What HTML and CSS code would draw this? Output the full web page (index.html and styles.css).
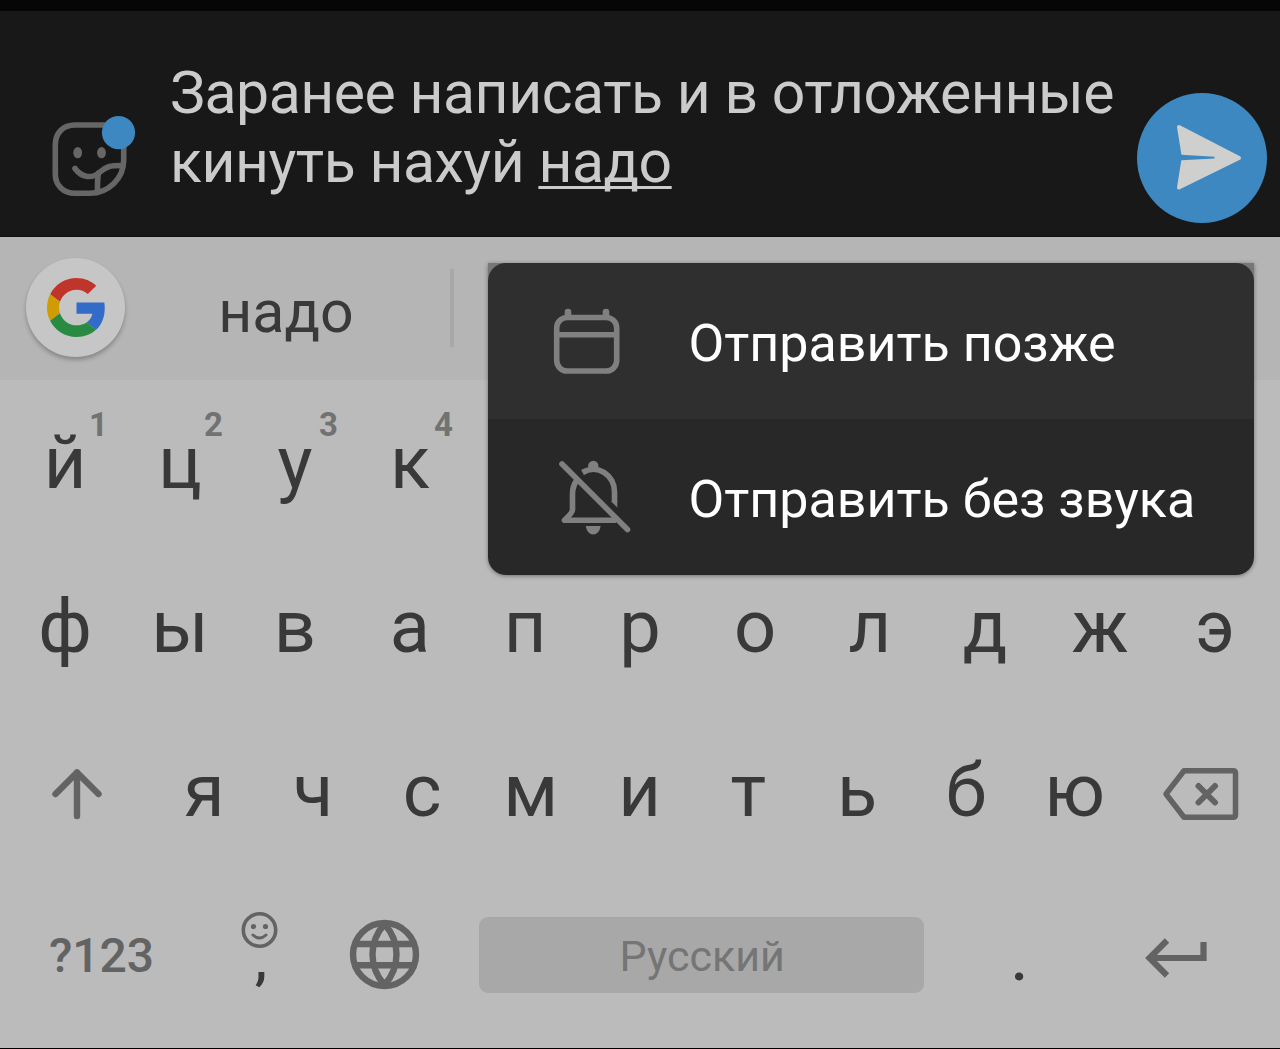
FILE: index.html
```
<!DOCTYPE html>
<html lang="ru">
<head>
  <meta charset="UTF-8">
  <meta name="viewport" content="width=device-width, initial-scale=1.0">
  <title>Сообщение</title>
  <link rel="stylesheet" href="styles.css">
</head>
<body>

<main class="screen">
  <section class="composer">
    <svg class="sticker" viewBox="0 0 96 96">
      <g fill="none" stroke="#666" stroke-width="5.6" stroke-linecap="round">
        <path d="M78.7 30V43C78.7 62 63 76.3 45 76.3H30C18 76.3 10.3 68 10.3 57V28C10.3 16 18 8 30 8H60"/>
        <path d="M30 51.5C37 61 47 62 55 55C61 49.5 65 48.5 77 48.5"/>
        <path d="M53.5 56C52.3 61 52.5 67 52.5 74"/>
      </g>
      <ellipse cx="32.7" cy="35.7" rx="4.4" ry="5.6" fill="#666"/>
      <ellipse cx="56.5" cy="35.7" rx="4.4" ry="5.6" fill="#666"/>
      <circle cx="73.5" cy="15.6" r="16.6" fill="#3d88c0"/>
    </svg>
    <p class="message">Заранее написать и в отложенные<br>кинуть нахуй <u>надо</u></p>
    <div class="send">
      <svg viewBox="0 0 130 130">
        <path d="M42 34L102 65L42 94.5L46.5 66L76 64.5L46.5 62Z" fill="#cfcfcd" stroke="#cfcfcd" stroke-width="4" stroke-linejoin="round"/>
        <path d="M40 61.5L77.5 63.8V65.6L40 67.5Z" fill="#3d88c0"/>
      </svg>
    </div>
  </section>

  <section class="suggestions">
    <div class="google">
      <svg viewBox="0 0 48 48">
        <path fill="#c0352a" d="M24 9.5c3.54 0 6.71 1.22 9.21 3.6l6.85-6.85C35.9 2.38 30.47 0 24 0 14.62 0 6.51 5.38 2.56 13.22l7.98 6.19C12.43 13.72 17.74 9.5 24 9.5z"/>
        <path fill="#326bc8" d="M46.98 24.55c0-1.57-.15-3.09-.38-4.55H24v9.02h12.94c-.58 2.96-2.26 5.48-4.78 7.18l7.73 6c4.51-4.18 7.09-10.36 7.09-17.65z"/>
        <path fill="#cf9c04" d="M10.53 28.59c-.48-1.45-.76-2.99-.76-4.59s.27-3.14.76-4.59l-7.98-6.19C.92 16.46 0 20.12 0 24c0 3.88.92 7.54 2.56 10.78l7.97-6.19z"/>
        <path fill="#298b41" d="M24 48c6.48 0 11.93-2.13 15.89-5.81l-7.73-6c-2.15 1.45-4.92 2.3-8.16 2.3-6.26 0-11.57-4.22-13.47-9.91l-7.98 6.19C6.51 42.62 14.62 48 24 48z"/>
      </svg>
    </div>
    <span class="suggestion">надо</span>
    <span class="divider"></span>
  </section>

  <section class="keyboard">
    <div class="row">
      <span class="key">й<sup>1</sup></span>
      <span class="key">ц<sup>2</sup></span>
      <span class="key">у<sup>3</sup></span>
      <span class="key">к<sup>4</sup></span>
    </div>
    <div class="row">
      <span class="key">ф</span>
      <span class="key">ы</span>
      <span class="key">в</span>
      <span class="key">а</span>
      <span class="key">п</span>
      <span class="key">р</span>
      <span class="key">о</span>
      <span class="key">л</span>
      <span class="key">д</span>
      <span class="key">ж</span>
      <span class="key">э</span>
    </div>
    <div class="row row-third">
      <span class="key">
        <svg width="60" height="60" viewBox="0 0 60 60" class="stroke">
          <path d="M28 55V11.5M6.500 33L28 11.500L49.500 33" stroke-width="6.400" stroke-linecap="round" stroke-linejoin="round"/>
        </svg>
      </span>
      <span class="key">я</span>
      <span class="key">ч</span>
      <span class="key">с</span>
      <span class="key">м</span>
      <span class="key">и</span>
      <span class="key">т</span>
      <span class="key">ь</span>
      <span class="key">б</span>
      <span class="key">ю</span>
      <span class="key">
        <svg width="80" height="60" viewBox="0 0 80 60" class="stroke">
          <path d="M6 33L24 9.700H73Q75.500 9.700 75.500 12.200V53.800Q75.500 56.300 73 56.300H24Z" stroke-width="5.500" stroke-linejoin="round"/>
          <path d="M38.500 25L55 41.500M55 25L38.500 41.500" stroke-width="6" stroke-linecap="round"/>
        </svg>
      </span>
    </div>
    <div class="row row-bottom">
      <span class="key symbols">?123</span>
      <span class="key comma">
        <svg width="40" height="40" viewBox="0 0 40 40" class="stroke">
          <circle cx="19.500" cy="20" r="16.200" stroke-width="3.600"/>
          <path d="M13 25Q19.500 31 26 25" stroke-width="3" stroke-linecap="round"/>
          <circle cx="13.500" cy="16.500" r="2.600" fill="#636363" stroke="none"/>
          <circle cx="25.500" cy="16.500" r="2.600" fill="#636363" stroke="none"/>
        </svg>
        <span>,</span>
      </span>
      <span class="key">
        <svg width="70" height="70" viewBox="0 0 70 70" class="stroke" stroke-width="6.400" stroke-linejoin="bevel">
          <circle cx="34.500" cy="34.500" r="31.500"/>
          <path d="M7 24H62M7 45.200H62"/>
          <path d="M34.500 4C18.500 22 18.500 47 34.500 65C50.500 47 50.500 22 34.500 4Z"/>
        </svg>
      </span>
      <span class="key space">Русский</span>
      <span class="key period">.</span>
      <span class="key">
        <svg width="70" height="50" viewBox="0 0 70 50" class="stroke" stroke-width="6.200">
          <path d="M27 10.500L9.500 28L27 45.500M9.500 28H63.500V12"/>
        </svg>
      </span>
    </div>
  </section>

  <div class="menu">
    <div class="menu-item active">
      <svg viewBox="0 0 96 96">
        <g fill="none" stroke="#808080" stroke-width="5.600">
          <rect x="17.700" y="24.500" width="60" height="53.500" rx="10.500"/>
          <path d="M18 41.700H77"/>
          <path d="M29 23V19M67 23V19" stroke-width="6.600" stroke-linecap="round"/>
        </g>
      </svg>
      <span>Отправить позже</span>
    </div>
    <div class="menu-item">
      <svg viewBox="0 0 96 96">
        <g fill="none" stroke="#808080" stroke-width="5.600" stroke-linejoin="round">
          <path d="M23 15L88.500 80.500" stroke-linecap="round"/>
          <path d="M38 31Q33.500 37 33.500 45V61Q33.500 63.500 25.500 71.300H77"/>
          <path d="M43.500 23.500C59 14.500 75.500 26.500 75.500 43V53"/>
        </g>
        <path d="M72.700 52H78.300V58.500L72.700 53Z" fill="#808080"/>
        <circle cx="54.300" cy="17" r="5.200" fill="#808080"/>
        <path d="M46.700 77H61.700Q60 85.500 54.200 85.500T46.700 77Z" fill="#808080"/>
      </svg>
      <span>Отправить без звука</span>
    </div>
  </div>
</main>

</body>
</html>
```
FILE: styles.css
```
* { box-sizing: border-box; }
body {
  margin: 0;
  font-family: Roboto, sans-serif;
  background-color: #000;
}
svg { display: block; overflow: visible; }
.screen {
  position: relative;
  width: 1280px;
  height: 1049px;
  border-top: 11px solid #060606;
  border-bottom: 1px solid #000;
  overflow: hidden;
}

/* message input */
.composer {
  display: flex;
  height: 226px;
  background-color: #181818;
  border-bottom: 1px solid #101010;
}
.sticker {
  width: 96px;
  height: 96px;
  margin: 106px 29px 0 45px;
}
.message {
  width: 967px;
  margin: 47px 0 0;
  color: #cbcbcb;
  font-size: 58.9px;
  letter-spacing: -0.45px;
  line-height: 69px;
  white-space: nowrap;
}
.message u {
  text-decoration-thickness: 3px;
  text-underline-offset: 4px;
  text-decoration-skip-ink: none;
}
.send {
  width: 130px;
  height: 130px;
  margin-top: 82px;
  border-radius: 50%;
  background-color: #3d88c0;
}

/* suggestion strip */
.suggestions {
  display: flex;
  align-items: center;
  height: 143px;
  padding: 0 0 2px 26px;
  background-color: #b5b5b5;
}
.google {
  display: flex;
  justify-content: center;
  align-items: center;
  width: 99px;
  height: 99px;
  border-radius: 50%;
  background-color: #c5c6c5;
  box-shadow: 0 3px 4px rgba(0,0,0,0.25);
}
.google svg { width: 59px; height: 59px; margin-left: 2px; }
.suggestion {
  width: 322px;
  padding-top: 7px;
  color: #393939;
  font-size: 59px;
  text-align: center;
}
.divider {
  width: 4px;
  height: 78px;
  margin-left: 3px;
  background-color: #a8a8a8;
}

/* keys */
.keyboard {
  display: grid;
  grid-template-rows: repeat(4, 164.25px);
  height: 668px;
  padding: 0 7.5px;
  background-color: #bbb;
}
.row {
  display: grid;
  grid-template-columns: repeat(11, 115px);
}
.row-third { grid-template-columns: 142.5px repeat(9, 108.8px) 142.5px; }
.row-bottom { grid-template-columns: 187px 131px 118px 516px 118px 195px; }
.key {
  position: relative;
  display: flex;
  justify-content: center;
  align-items: center;
  color: #393939;
  font-size: 74px;
}
.key sup {
  position: absolute;
  top: 25px;
  left: 81.5px;
  color: #727272;
  font-size: 33px;
  font-weight: 700;
  line-height: 39px;
}
.stroke { fill: none; stroke: #636363; }
.symbols {
  padding: 2px 0 0 1px;
  color: #636363;
  font-size: 48px;
  font-weight: 500;
}
.comma {
  flex-direction: column;
  justify-content: flex-start;
  padding-top: 37px;
}
.comma span {
  margin: -21px 0 0 2px;
  font-size: 56px;
  font-weight: 500;
  line-height: 60px;
}
.period { padding-left: 2px; }
.space {
  height: 76px;
  margin: 44px 35.5px 0 35px;
  padding: 2px 0 0 2px;
  border-radius: 9px;
  background-color: #a8a8a8;
  color: #757575;
  font-size: 43px;
}

/* send options popup */
.menu {
  position: absolute;
  top: 252px;
  left: 488px;
  width: 766px;
  border-radius: 0 0 18px 18px;
  background: linear-gradient(#777 20px, transparent 20px);
  box-shadow: 0 1px 4px rgba(0,0,0,0.4);
}
.menu-item {
  display: flex;
  align-items: center;
  height: 156px;
  padding-left: 51px;
  border-radius: 0 0 18px 18px;
  background-color: #282828;
  color: #fff;
  font-size: 52px;
}
.menu-item.active {
  border-radius: 18px 18px 0 0;
  background-color: #2f2f2f;
}
.menu-item svg { width: 96px; height: 96px; margin-right: 53.5px; }
.menu-item span { padding-top: 4px; }
```
